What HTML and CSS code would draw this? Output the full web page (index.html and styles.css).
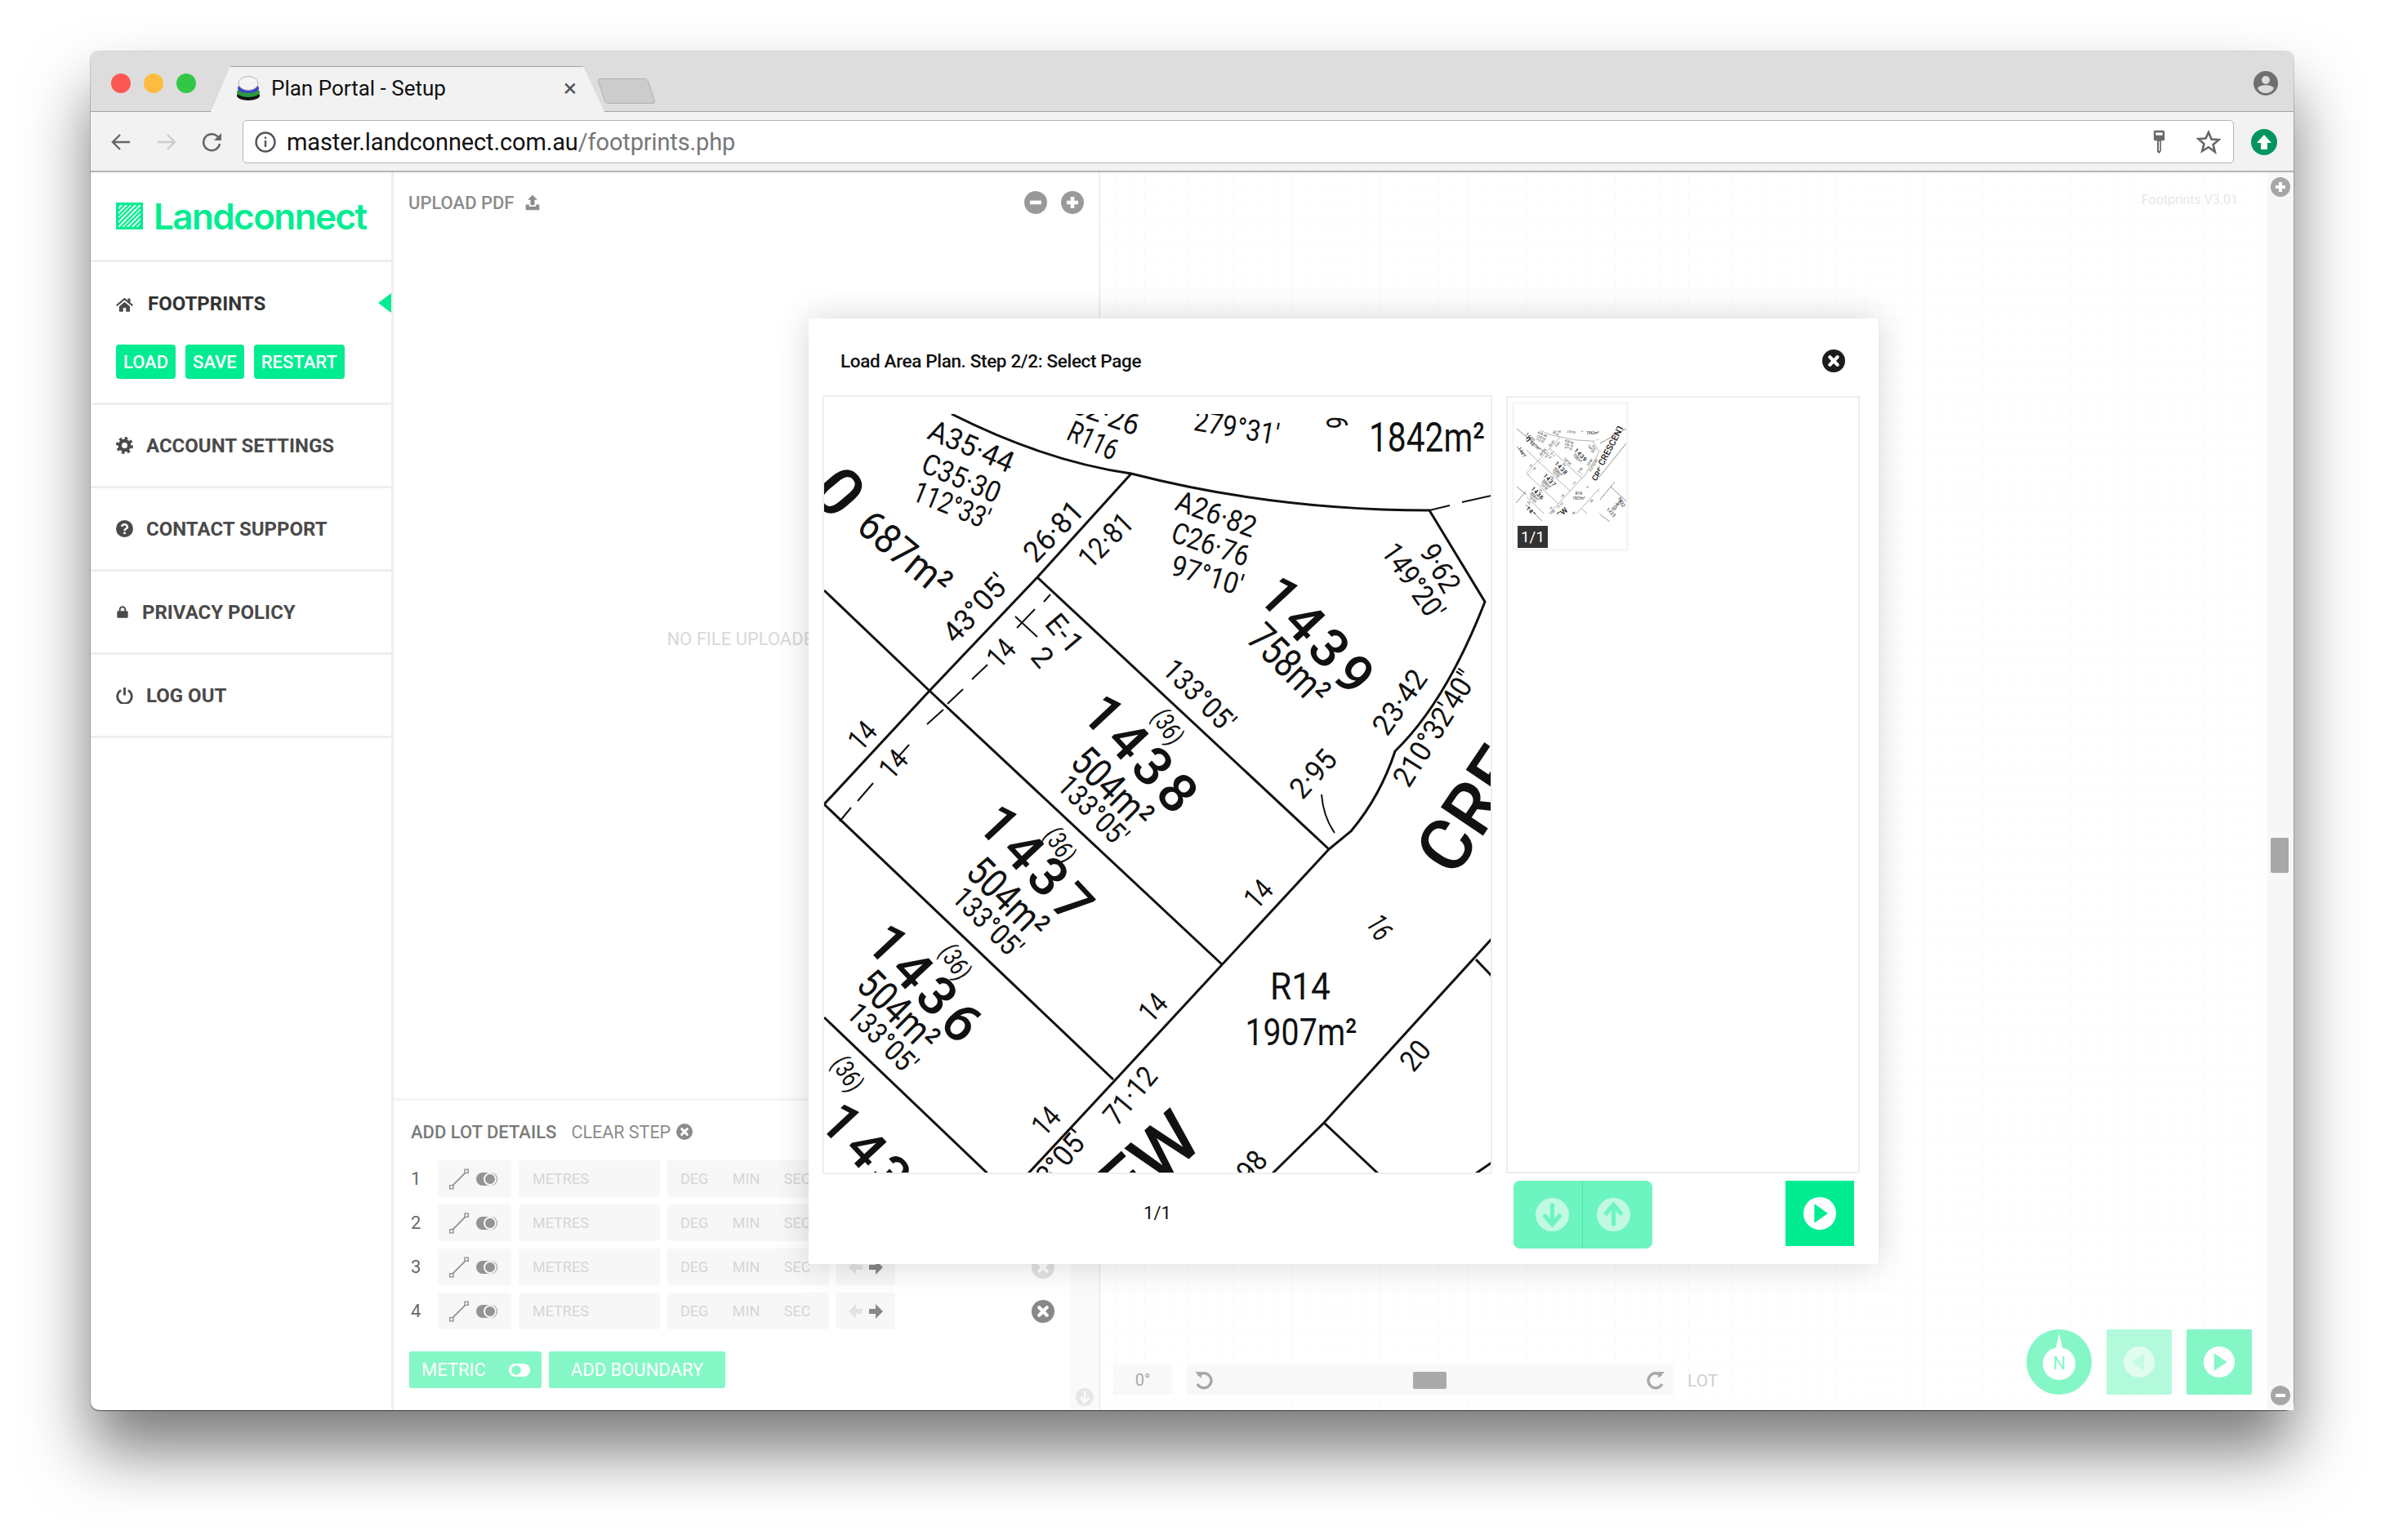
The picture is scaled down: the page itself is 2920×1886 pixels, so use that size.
FILE: index.html
```html
<!DOCTYPE html>
<html lang="en">
<head>
    <meta charset="UTF-8">
    <title>Plan Portal - Setup</title>
    <link rel="stylesheet" href="styles.css">
</head>
<body>

<svg class="defs" width="0" height="0">
    <symbol id="i-x" viewBox="0 0 24 24"><circle cx="12" cy="12" r="12" fill="currentColor"/><path d="M8 8l8 8M16 8l-8 8" stroke="#fff" stroke-width="3.6" stroke-linecap="round"/></symbol>
    <symbol id="i-plus" viewBox="0 0 24 24"><circle cx="12" cy="12" r="12" fill="currentColor"/><path d="M12 6v12M6 12h12" stroke="#fff" stroke-width="4"/></symbol>
    <symbol id="i-minus" viewBox="0 0 24 24"><circle cx="12" cy="12" r="12" fill="currentColor"/><path d="M6 12h12" stroke="#fff" stroke-width="4"/></symbol>
    <symbol id="i-home" viewBox="0 0 24 24"><path fill="currentColor" d="M12 3 0 13l1.600 1.900L12 6.300l10.400 8.600L24 13l-4-3.300V4h-3.500v2.800zM4.500 15v7.500h5.500V17h4v5.500h5.500V15L12 8.800z"/></symbol>
    <symbol id="i-gear" viewBox="0 0 24 24"><circle cx="12" cy="12" r="6.500" fill="none" stroke="currentColor" stroke-width="5"/><circle cx="12" cy="12" r="10" fill="none" stroke="currentColor" stroke-width="4" stroke-dasharray="3.900 3.950"/></symbol>
    <symbol id="i-help" viewBox="0 0 24 24"><circle cx="12" cy="12" r="12" fill="currentColor"/><path d="M8.300 9.200a3.800 3.300 0 1 1 5.600 3c-1.300.7-1.900 1.200-1.900 2.600" fill="none" stroke="#fff" stroke-width="2.800"/><rect x="10.500" y="16.500" width="3" height="3" fill="#fff"/></symbol>
    <symbol id="i-lock" viewBox="0 0 24 24"><rect x="2" y="10" width="20" height="13" rx="2" fill="currentColor"/><path d="M7 11V7.500a5 5 0 0 1 10 0V11" fill="none" stroke="currentColor" stroke-width="3"/></symbol>
    <symbol id="i-power" viewBox="0 0 24 24"><path d="M7 5a10 10 0 1 0 10 0M12 1v11" fill="none" stroke="currentColor" stroke-width="3.200"/></symbol>
    <symbol id="i-upload" viewBox="0 0 24 24"><path fill="currentColor" d="M12 1l7 7h-4v8H9V8H5zM2 15h5v3h10v-3h5v8H2z"/></symbol>
    <symbol id="i-down" viewBox="0 0 24 24"><circle cx="12" cy="12" r="12" fill="currentColor"/><path d="M12 4v14M6 12l6 7 6-7" fill="none" stroke="var(--cut, #fff)" stroke-width="3"/></symbol>
    <symbol id="i-up" viewBox="0 0 24 24"><circle cx="12" cy="12" r="12" fill="currentColor"/><path d="M12 20V6M6 12l6-7 6 7" fill="none" stroke="var(--cut, #fff)" stroke-width="3"/></symbol>
    <symbol id="i-next" viewBox="0 0 24 24"><circle cx="12" cy="12" r="12" fill="currentColor"/><path d="M8 5l10 7-10 7z" fill="var(--cut, #fff)"/></symbol>
    <symbol id="i-prev" viewBox="0 0 24 24"><circle cx="12" cy="12" r="12" fill="currentColor"/><path d="M16 5L6 12l10 7z" fill="var(--cut, #fff)"/></symbol>
    <symbol id="i-undo" viewBox="0 0 24 24"><path d="M6 7a9 9 0 1 1-1 10" fill="none" stroke="currentColor" stroke-width="3.400"/><path d="M2 2h8v8z" fill="currentColor"/></symbol>
    <symbol id="i-redo" viewBox="0 0 24 24"><path d="M18 7a9 9 0 1 0 1 10" fill="none" stroke="currentColor" stroke-width="3.400"/><path d="M22 2h-8v8z" fill="currentColor"/></symbol>
    <symbol id="i-line" viewBox="0 0 26 26"><path d="M5 21 21 5" stroke="currentColor" stroke-width="1.400"/><path d="M2.500 20h4v4h-4zM19.500 2h4v4h-4z" fill="#f7f7f7" stroke="currentColor" stroke-width="1.200"/></symbol>
    <symbol id="i-toggle" viewBox="0 0 26 16"><rect width="26" height="16" rx="8" fill="#949494"/><circle cx="17" cy="8" r="7" fill="#949494" stroke="#f7f7f7" stroke-width="2"/></symbol>
    <symbol id="i-swap" viewBox="0 0 48 24"><path d="M12 3 3 12l9 9v-6h8V9h-8z" fill="#e3e3e3"/><path d="M36 3l9 9-9 9v-6h-8V9h8z" fill="#888"/></symbol>
</svg>

<div class="window">
    <div class="tabstrip">
        <div class="lights">
            <span class="light light-red"></span>
            <span class="light light-amber"></span>
            <span class="light light-green"></span>
        </div>
        <div class="tab">
            <svg class="favicon" viewBox="0 0 30 30">
                <ellipse cx="15" cy="24" rx="14" ry="6" fill="#111"/>
                <ellipse cx="15" cy="20" rx="14" ry="6" fill="#2a9a3c"/>
                <ellipse cx="15" cy="15" rx="13" ry="6" fill="#3d45c8"/>
                <ellipse cx="15" cy="9" rx="12" ry="8.500" fill="#f4f4f4" stroke="#b5b5b5"/>
            </svg>
            <span class="tab-title">Plan Portal - Setup</span>
            <span class="tab-close">×</span>
        </div>
        <div class="newtab"></div>
        <svg class="profile" viewBox="0 0 30 30">
            <circle cx="15" cy="15" r="15" fill="#6f6f6f"/>
            <circle cx="15" cy="11" r="5" fill="#dcdcdc"/>
            <path d="M5 21c3-5 17-5 20 0-2 4-6 6-10 6s-8-2-10-6z" fill="#dcdcdc"/>
        </svg>
    </div>

    <div class="toolbar">
        <svg class="nav-ico nav-back" viewBox="0 0 26 26"><path d="M24 13H4M12 4l-9 9 9 9" fill="none" stroke="currentColor" stroke-width="2.400"/></svg>
        <svg class="nav-ico nav-fwd" viewBox="0 0 26 26"><path d="M2 13h20M14 4l9 9-9 9" fill="none" stroke="currentColor" stroke-width="2.400"/></svg>
        <svg class="nav-ico nav-reload" viewBox="0 0 26 26"><path d="M20 7a10 10 0 1 0 2 8" fill="none" stroke="currentColor" stroke-width="2.600"/><path d="M24 2v9h-9z" fill="currentColor"/></svg>
        <div class="omnibox">
            <svg class="info" viewBox="0 0 26 26"><circle cx="13" cy="13" r="11.500" fill="none" stroke="currentColor" stroke-width="2.400"/><path d="M13 11v8M13 6.500v2.500" stroke="currentColor" stroke-width="2.400"/></svg>
            <span class="url">master.landconnect.com.au<span class="url-path">/footprints.php</span></span>
            <svg class="key" viewBox="0 0 18 34"><path fill="#6a6a6a" d="M1 2a2 2 0 0 1 2-2h12a2 2 0 0 1 2 2v11a2 2 0 0 1-2 2h-3v15l-3 4-3-3V15H3a2 2 0 0 1-2-2z"/><rect x="4" y="3" width="10" height="4" fill="#fff"/><rect x="8.500" y="16" width="1.500" height="14" fill="#fff"/></svg>
            <svg class="star" viewBox="0 0 30 30"><path d="M15 3l3.500 8.500 9 .7-6.900 5.900 2.200 8.900L15 21.200l-7.800 4.800 2.200-8.900-6.900-5.900 9-.7z" fill="none" stroke="#666" stroke-width="2.600"/></svg>
        </div>
        <svg class="update" viewBox="0 0 32 32"><circle cx="16" cy="16" r="16" fill="#00955f"/><path d="M16 7l9 10h-5v8h-8v-8H7z" fill="#fff"/></svg>
    </div>

    <div class="app">
        <aside class="sidebar">
            <div class="brand">
                <span class="brand-mark"></span>
                <span class="brand-name">Landconnect</span>
            </div>
            <div class="nav-item nav-current">
                <div class="nav-line">
                    <svg class="nav-glyph"><use href="#i-home"/></svg>
                    <span class="nav-text nav-text-strong">FOOTPRINTS</span>
                </div>
                <div class="nav-actions">
                    <button class="btn-small">LOAD</button>
                    <button class="btn-small">SAVE</button>
                    <button class="btn-small">RESTART</button>
                </div>
            </div>
            <div class="nav-item">
                <div class="nav-line">
                    <svg class="nav-glyph"><use href="#i-gear"/></svg>
                    <span class="nav-text">ACCOUNT SETTINGS</span>
                </div>
            </div>
            <div class="nav-item">
                <div class="nav-line">
                    <svg class="nav-glyph"><use href="#i-help"/></svg>
                    <span class="nav-text">CONTACT SUPPORT</span>
                </div>
            </div>
            <div class="nav-item">
                <div class="nav-line">
                    <svg class="nav-glyph nav-glyph-lock"><use href="#i-lock"/></svg>
                    <span class="nav-text">PRIVACY POLICY</span>
                </div>
            </div>
            <div class="nav-item">
                <div class="nav-line">
                    <svg class="nav-glyph"><use href="#i-power"/></svg>
                    <span class="nav-text">LOG OUT</span>
                </div>
            </div>
        </aside>

        <section class="pdf-panel">
            <div class="pdf-head">
                <span class="pdf-title">UPLOAD PDF</span>
                <svg class="pdf-upload"><use href="#i-upload"/></svg>
                <svg class="zoom-btn zoom-first"><use href="#i-minus"/></svg>
                <svg class="zoom-btn"><use href="#i-plus"/></svg>
            </div>
            <div class="pdf-empty">NO FILE UPLOADED</div>
            <div class="lot">
                <div class="lot-main">
                    <div class="lot-head">
                        <span class="lot-title">ADD LOT DETAILS</span>
                        <span class="lot-clear">CLEAR STEP</span>
                        <svg class="lot-clear-ico"><use href="#i-x"/></svg>
                    </div>
                    <div class="lot-row">
                        <span class="lot-num">1</span>
                        <div class="cell cell-type"><svg class="ico-line"><use href="#i-line"/></svg><svg class="ico-toggle"><use href="#i-toggle"/></svg></div>
                        <div class="cell cell-metres">METRES</div>
                        <div class="cell cell-angle"><span>DEG</span><span>MIN</span><span>SEC</span></div>
                        <div class="cell cell-swap"><svg class="ico-swap"><use href="#i-swap"/></svg></div>
                    </div>
                    <div class="lot-row">
                        <span class="lot-num">2</span>
                        <div class="cell cell-type"><svg class="ico-line"><use href="#i-line"/></svg><svg class="ico-toggle"><use href="#i-toggle"/></svg></div>
                        <div class="cell cell-metres">METRES</div>
                        <div class="cell cell-angle"><span>DEG</span><span>MIN</span><span>SEC</span></div>
                        <div class="cell cell-swap"><svg class="ico-swap"><use href="#i-swap"/></svg></div>
                    </div>
                    <div class="lot-row">
                        <span class="lot-num">3</span>
                        <div class="cell cell-type"><svg class="ico-line"><use href="#i-line"/></svg><svg class="ico-toggle"><use href="#i-toggle"/></svg></div>
                        <div class="cell cell-metres">METRES</div>
                        <div class="cell cell-angle"><span>DEG</span><span>MIN</span><span>SEC</span></div>
                        <div class="cell cell-swap"><svg class="ico-swap"><use href="#i-swap"/></svg></div>
                        <svg class="lot-del lot-del-off"><use href="#i-x"/></svg>
                    </div>
                    <div class="lot-row">
                        <span class="lot-num">4</span>
                        <div class="cell cell-type"><svg class="ico-line"><use href="#i-line"/></svg><svg class="ico-toggle"><use href="#i-toggle"/></svg></div>
                        <div class="cell cell-metres">METRES</div>
                        <div class="cell cell-angle"><span>DEG</span><span>MIN</span><span>SEC</span></div>
                        <div class="cell cell-swap"><svg class="ico-swap"><use href="#i-swap"/></svg></div>
                        <svg class="lot-del"><use href="#i-x"/></svg>
                    </div>
                    <div class="lot-actions">
                        <button class="btn-soft btn-metric">METRIC
                            <svg class="ico-metric" viewBox="0 0 26 16"><rect width="26" height="16" rx="8" fill="#fff"/><circle cx="9" cy="8" r="6.500" fill="#85f7c7" stroke="#fff" stroke-width="1.500"/></svg>
                        </button>
                        <button class="btn-soft btn-boundary">ADD BOUNDARY</button>
                    </div>
                </div>
                <div class="lot-strip"><svg class="lot-strip-ico"><use href="#i-down"/></svg></div>
            </div>
        </section>

        <section class="stage">
            <div class="stage-main">
                <div class="version">Footprints V3.01</div>
                <div class="controls">
                    <div class="angle-box">0°</div>
                    <div class="rotate">
                        <svg class="rotate-ico"><use href="#i-undo"/></svg>
                        <span class="rotate-thumb"></span>
                        <svg class="rotate-ico"><use href="#i-redo"/></svg>
                    </div>
                    <span class="lot-label">LOT</span>
                    <svg class="compass" viewBox="0 0 80 80">
                        <circle cx="40" cy="40" r="40" fill="#85f7c7"/>
                        <path d="M40 5l5 22H35z" fill="#fff"/>
                        <circle cx="40" cy="42" r="20" fill="#fff"/>
                        <text class="compass-n" x="40" y="49">N</text>
                    </svg>
                    <button class="square square-off"><svg class="square-ico"><use href="#i-prev"/></svg></button>
                    <button class="square"><svg class="square-ico"><use href="#i-next"/></svg></button>
                </div>
            </div>
            <div class="stage-strip">
                <svg class="strip-ico"><use href="#i-plus"/></svg>
                <span class="strip-thumb"></span>
                <svg class="strip-ico"><use href="#i-minus"/></svg>
            </div>
        </section>

        <div class="modal">
            <div class="modal-head">
                <span class="modal-title">Load Area Plan. Step 2/2: Select Page</span>
                <svg class="modal-close"><use href="#i-x"/></svg>
            </div>
            <div class="modal-body">
                <div class="page-view">
                    <svg class="plan" viewBox="1008 485 818 952" width="818" height="952">
                        <defs>
                            <clipPath id="plan-clip"><rect x="1008" y="507" width="818" height="930"/></clipPath>
                        </defs>
                        <g id="plan" clip-path="url(#plan-clip)">
                            <path class="pl" d="M1165 507Q1280 565 1385 580Q1560 625 1750 625L1818 737Q1770 860 1708 920Q1690 975 1654 1018L1627 1040L1366 1322L1259 1437"/>
                            <path class="pl" d="M1385 580L1270 707L1138 846L1009 985L1363 1322"/>
                            <path class="pl" d="M1009 723L1138 846L1496 1181"/>
                            <path class="pl" d="M1270 707L1627 1040"/>
                            <path class="pl" d="M1009 1246L1209 1437"/>
                            <path class="pl" d="M1826 1150L1621 1375L1558 1437"/>
                            <path class="pl" d="M1621 1375L1687 1437"/>
                            <path class="pl" d="M1807 1175L1826 1195"/>
                            <path class="pl" d="M1826 1424L1807 1437"/>
                            <path class="pl-thin" d="M1618 973Q1620 1000 1634 1020"/>
                            <path class="pl-thin" d="M1267 746L1245 769M1243 755L1270 780"/>
                            <path class="pl-thin" d="M1750 625L1775 619M1790 615L1826 607"/>
                            <path class="pl-thin" d="M1286 728L1278 737M1209 814L1190 832M1179 844L1160 862M1155 869L1135 887M1113 912L1097 930M1069 959L1050 981M1042 989L1028 1006"/>

                            <text class="t t-l" transform="translate(1747 536)" textLength="142" lengthAdjust="spacingAndGlyphs">1842m²</text>
                            <text class="t t-m" transform="translate(1189 547) rotate(23)" textLength="110" lengthAdjust="spacingAndGlyphs">A35·44</text>
                            <text class="t t-m" transform="translate(1177 586) rotate(23)" textLength="101" lengthAdjust="spacingAndGlyphs">C35·30</text>
                            <text class="t t-m" transform="translate(1165 619) rotate(22)" textLength="98" lengthAdjust="spacingAndGlyphs">112°33'</text>
                            <text class="t t-m" transform="translate(1354 508) rotate(20)" textLength="85" lengthAdjust="spacingAndGlyphs">52·26</text>
                            <text class="t t-m" transform="translate(1338 540) rotate(25)" textLength="64" lengthAdjust="spacingAndGlyphs">R116</text>
                            <text class="t t-m" transform="translate(1514 524) rotate(10)" textLength="105" lengthAdjust="spacingAndGlyphs">279°31'</text>
                            <text class="t t-m" transform="translate(1636 510) rotate(90)" textLength="30" lengthAdjust="spacingAndGlyphs">16</text>
                            <text class="t t-h" transform="translate(1026 603) rotate(50)">0</text>
                            <text class="t t-l" transform="translate(1108 678) rotate(40)" textLength="132" lengthAdjust="spacingAndGlyphs">687m²</text>
                            <text class="t t-m" transform="translate(1290 651) rotate(-46)" textLength="88" lengthAdjust="spacingAndGlyphs">26·81</text>
                            <text class="t t-m" transform="translate(1354 662) rotate(-45)" textLength="78" lengthAdjust="spacingAndGlyphs">12·81</text>
                            <text class="t t-m" transform="translate(1195 745) rotate(-47)" textLength="100" lengthAdjust="spacingAndGlyphs">43°05'</text>
                            <text class="t t-m" transform="translate(1489 630) rotate(20)" textLength="102" lengthAdjust="spacingAndGlyphs">A26·82</text>
                            <text class="t t-m" transform="translate(1482 667) rotate(19)" textLength="98" lengthAdjust="spacingAndGlyphs">C26·76</text>
                            <text class="t t-m" transform="translate(1478 705) rotate(17)" textLength="90" lengthAdjust="spacingAndGlyphs">97°10'</text>
                            <text class="t t-b" transform="translate(1612 778) rotate(47)" textLength="170">1439</text>
                            <text class="t t-l" transform="translate(1578 814) rotate(45)" textLength="118" lengthAdjust="spacingAndGlyphs">758m²</text>
                            <text class="t t-m" transform="translate(1763 696) rotate(60)" textLength="62" lengthAdjust="spacingAndGlyphs">9·62</text>
                            <text class="t t-m" transform="translate(1730 712) rotate(55)" textLength="105" lengthAdjust="spacingAndGlyphs">149°20'</text>
                            <text class="t t-m" transform="translate(1714 860) rotate(-55)" textLength="88" lengthAdjust="spacingAndGlyphs">23·42</text>
                            <text class="t t-m" transform="translate(1757 892) rotate(-58)" textLength="160" lengthAdjust="spacingAndGlyphs">210°32'40"</text>
                            <text class="t t-m" transform="translate(1226 800) rotate(-47)" textLength="32" lengthAdjust="spacingAndGlyphs">14</text>
                            <text class="t t-m" transform="translate(1303 776) rotate(50)" textLength="50" lengthAdjust="spacingAndGlyphs">E-1</text>
                            <text class="t t-m" transform="translate(1276 805) rotate(50)">2</text>
                            <text class="t t-m" transform="translate(1468 852) rotate(45)" textLength="108" lengthAdjust="spacingAndGlyphs">133°05'</text>
                            <text class="t t-m" transform="translate(1056 901) rotate(-48)" textLength="32" lengthAdjust="spacingAndGlyphs">14</text>
                            <text class="t t-m" transform="translate(1094 936) rotate(-48)" textLength="32" lengthAdjust="spacingAndGlyphs">14</text>

                            <text class="t t-b" transform="translate(1396 923) rotate(47)" textLength="170">1438</text>
                            <text class="t t-s" transform="translate(1430 890) rotate(58)" textLength="44" lengthAdjust="spacingAndGlyphs">(36)</text>
                            <text class="t t-l" transform="translate(1362 965) rotate(45)" textLength="118" lengthAdjust="spacingAndGlyphs">504m²</text>
                            <text class="t t-m" transform="translate(1338 993) rotate(45)" textLength="105" lengthAdjust="spacingAndGlyphs">133°05'</text>
                            <text class="t t-m" transform="translate(1608 948) rotate(-48)" textLength="66" lengthAdjust="spacingAndGlyphs">2·95</text>

                            <text class="t t-b" transform="translate(1268 1058) rotate(47)" textLength="170">1437</text>
                            <text class="t t-s" transform="translate(1298 1035) rotate(58)" textLength="44" lengthAdjust="spacingAndGlyphs">(36)</text>
                            <text class="t t-l" transform="translate(1234 1100) rotate(45)" textLength="118" lengthAdjust="spacingAndGlyphs">504m²</text>
                            <text class="t t-m" transform="translate(1209 1130) rotate(45)" textLength="105" lengthAdjust="spacingAndGlyphs">133°05'</text>
                            <text class="t t-m" transform="translate(1541 1095) rotate(-47)" textLength="32" lengthAdjust="spacingAndGlyphs">14</text>

                            <text class="t t-b" transform="translate(1132 1204) rotate(47)" textLength="170">1436</text>
                            <text class="t t-s" transform="translate(1170 1178) rotate(58)" textLength="44" lengthAdjust="spacingAndGlyphs">(36)</text>
                            <text class="t t-l" transform="translate(1100 1238) rotate(45)" textLength="118" lengthAdjust="spacingAndGlyphs">504m²</text>
                            <text class="t t-m" transform="translate(1080 1272) rotate(45)" textLength="105" lengthAdjust="spacingAndGlyphs">133°05'</text>
                            <text class="t t-s" transform="translate(1038 1315) rotate(58)" textLength="44" lengthAdjust="spacingAndGlyphs">(36)</text>
                            <text class="t t-b" transform="translate(1075 1423) rotate(47)" textLength="170">1435</text>

                            <text class="t t-m" transform="translate(1412 1234) rotate(-47)" textLength="32" lengthAdjust="spacingAndGlyphs">14</text>
                            <text class="t t-m" transform="translate(1281 1373) rotate(-47)" textLength="32" lengthAdjust="spacingAndGlyphs">14</text>
                            <text class="t t-m" transform="translate(1384 1342) rotate(-50)" textLength="80" lengthAdjust="spacingAndGlyphs">71·12</text>
                            <text class="t t-m" transform="translate(1300 1418) rotate(-50)" textLength="76" lengthAdjust="spacingAndGlyphs">3°05'</text>
                            <text class="t t-r" transform="translate(1592 1207)" textLength="74" lengthAdjust="spacingAndGlyphs">R14</text>
                            <text class="t t-r" transform="translate(1593 1263)" textLength="137" lengthAdjust="spacingAndGlyphs">1907m²</text>
                            <text class="t t-m" transform="translate(1689 1136) rotate(60)" textLength="28" lengthAdjust="spacingAndGlyphs">16</text>
                            <text class="t t-m" transform="translate(1733 1293) rotate(-50)" textLength="36" lengthAdjust="spacingAndGlyphs">20</text>
                            <text class="t t-m" transform="translate(1533 1428) rotate(-50)" textLength="36" lengthAdjust="spacingAndGlyphs">98</text>
                            <text class="t t-x" transform="translate(1407 1422) rotate(-42)" textLength="130" lengthAdjust="spacingAndGlyphs">EW</text>
                            <text class="t t-x" transform="translate(1815 970) rotate(-56)" textLength="215" lengthAdjust="spacingAndGlyphs">CRES</text>
                        </g>
                    </svg>
                </div>
                <div class="page-list">
                    <div class="page-thumb">
                        <svg class="thumb-img" viewBox="1852 520 137 117" width="137" height="117">
                            <g transform="translate(1755.700 469.400) scale(.11)"><use href="#plan"/></g>
                            <path class="th" d="M1855 523l40 34M1855 545l12 12M1855 594l12 10M1957 541l32-18M1957 581l32-40M1957 610l18-22M1970 594l19 18M1957 628l12 9M1866 600l-12 14M1866 616l20 20"/>
                            <text class="th-text" transform="translate(1865 530) rotate(45)">1440</text>
                            <text class="th-text" transform="translate(1856 547) rotate(60)">1441</text>
                            <text class="th-text th-bold" transform="translate(1961 569) rotate(-62)">CRESCENT</text>
                            <text class="th-text" transform="translate(1978 608) rotate(60)">1432</text>
                            <text class="th-text" transform="translate(1964 622) rotate(45)">1433</text>
                            <text class="th-text" transform="translate(1974 624) rotate(-50)">504m²</text>
                        </svg>
                        <span class="thumb-tag">1/1</span>
                    </div>
                </div>
            </div>
            <div class="modal-foot">
                <div class="page-count">1/1</div>
                <div class="pager">
                    <button class="pager-btn pager-down"><svg class="pager-ico"><use href="#i-down"/></svg></button>
                    <button class="pager-btn pager-up"><svg class="pager-ico"><use href="#i-up"/></svg></button>
                </div>
                <button class="go"><svg class="go-ico"><use href="#i-next"/></svg></button>
            </div>
        </div>
    </div>
</div>

</body>
</html>
```
FILE: styles.css
```css
:root {
    --green: #00ec91;
    --green-soft: #85f7c7;
    --green-pale: #b3fadc;
    --line: #eeeeee;
    --cell: #f7f7f7;
    --ink: #4a4a4a;
}

*, *::before, *::after {
    box-sizing: border-box;
    margin: 0;
    padding: 0;
}

body {
    width: 2920px;
    height: 1886px;
    padding: 63px 0 0 111px;
    background: #fff;
    font-family: Roboto, "Liberation Sans", sans-serif;
    overflow: hidden;
}

button {
    border: 0;
    font-family: inherit;
    cursor: pointer;
}

.defs {
    position: absolute;
}

.window {
    width: 2697px;
    height: 1664px;
    display: flex;
    flex-direction: column;
    background: #fff;
    border-radius: 10px;
    box-shadow: 0 50px 80px rgba(0, 0, 0, 0.52), 0 0 0 1px rgba(0, 0, 0, 0.12), 0 1px 1px rgba(0, 0, 0, 0.5);
    overflow: visible;
}

/* browser chrome */
.tabstrip {
    height: 74px;
    display: flex;
    align-items: flex-end;
    background: #dddddd;
    border-bottom: 1px solid #a3a3a3;
    border-radius: 10px 10px 0 0;
    padding-right: 19px;
    position: relative;
}

.lights {
    display: flex;
    gap: 16px;
    align-self: flex-start;
    padding: 27px 0 0 25px;
    width: 147px;
}

.light {
    width: 24px;
    height: 24px;
    border-radius: 50%;
}

.light-red { background: #fc5753; }
.light-amber { background: #fdbc40; }
.light-green { background: #33c748; }

.tab {
    width: 482px;
    height: 56px;
    margin-bottom: -1px;
    display: flex;
    align-items: center;
    padding: 0 34px 2px 31px;
    background: #f2f2f2;
    clip-path: polygon(0 100%, 24px 0, 456px 0, 100% 100%);
    position: relative;
}

.tab::before {
    content: '';
    position: absolute;
    left: 24px;
    right: 26px;
    top: 0;
    height: 1px;
    background: #a3a3a3;
}

.favicon {
    width: 30px;
    height: 30px;
    flex: none;
}

.tab-title {
    margin-left: 13px;
    font-size: 26px;
    color: #111;
    flex: 1;
}

.tab-close {
    font-size: 30px;
    color: #555;
    line-height: 1;
}

.newtab {
    width: 62px;
    height: 31px;
    margin: 0 0 9px -4px;
    background: #cccccc;
    border: 1px solid #b0b0b0;
    border-radius: 4px;
    transform: skewX(18deg);
}

.profile {
    width: 30px;
    height: 30px;
    margin-left: auto;
    align-self: flex-start;
    margin-top: 24px;
}

.toolbar {
    height: 74px;
    display: flex;
    align-items: center;
    background: #f2f2f2;
    border-bottom: 2px solid #b4b4b4;
    padding: 1px 20px 0 24px;
}

.nav-ico {
    width: 26px;
    height: 26px;
    margin-right: 30px;
    flex: none;
}

.nav-back { color: #666; }
.nav-fwd { color: #ccc; }
.nav-reload { color: #666; margin-right: 24px; }

.omnibox {
    width: 2438px;
    height: 53px;
    display: flex;
    align-items: center;
    background: #fff;
    border: 1px solid #b4b4b4;
    border-radius: 5px;
    padding: 0 15px 0 14px;
}

.info {
    width: 26px;
    height: 26px;
    color: #555;
    flex: none;
}

.url {
    margin-left: 13px;
    font-size: 29px;
    color: #111;
    letter-spacing: -0.13px;
}

.url-path { color: #777; }

.key {
    width: 15px;
    height: 30px;
    margin-left: auto;
}

.star {
    width: 30px;
    height: 30px;
    margin-left: 38px;
}

.update {
    width: 32px;
    height: 32px;
    margin-left: 21px;
}

/* app layout */
.app {
    flex: 1;
    display: flex;
    position: relative;
    min-height: 0;
}

.sidebar {
    width: 371px;
    flex: none;
    border-right: 3px solid var(--line);
}

.brand {
    height: 110px;
    display: flex;
    align-items: center;
    gap: 13px;
    padding: 0 0 0 31px;
    border-bottom: 3px solid var(--line);
}

.brand-mark {
    width: 33px;
    height: 33px;
    border: 3px solid var(--green);
    background: repeating-linear-gradient(135deg, var(--green) 0 2px, #d4fcec 2px 4px);
}

.brand-name {
    font-family: Inter, Roboto, sans-serif;
    font-size: 44px;
    font-weight: 600;
    color: var(--green);
    letter-spacing: -1.600px;
    line-height: 1;
}

.nav-item {
    height: 102px;
    padding: 0 0 0 31px;
    border-bottom: 3px solid var(--line);
    display: flex;
    flex-direction: column;
    justify-content: center;
}

.nav-current {
    height: 175px;
    justify-content: flex-start;
    padding-top: 37px;
    position: relative;
}

.nav-current::after {
    content: '';
    position: absolute;
    right: 0;
    top: 38px;
    border-style: solid;
    border-width: 12px 16px 12px 0;
    border-color: transparent var(--green) transparent transparent;
}

.nav-line {
    display: flex;
    align-items: center;
    gap: 16px;
}

.nav-glyph {
    width: 21px;
    height: 21px;
    color: var(--ink);
    flex: none;
}

.nav-glyph-lock {
    width: 16px;
}

.nav-text {
    font-size: 24px;
    font-weight: 700;
    color: var(--ink);
    line-height: 28px;
}

.nav-text-strong {
    color: #333;
    margin-left: 2px;
}

.nav-actions {
    display: flex;
    gap: 12px;
    margin-top: 36px;
}

.btn-small {
    height: 42px;
    padding: 0 9px;
    background: var(--green);
    border-radius: 4px;
    color: #fff;
    font-size: 22px;
    font-weight: 500;
}

/* pdf panel */
.pdf-panel {
    width: 865px;
    flex: none;
    display: flex;
    flex-direction: column;
    border-right: 2px solid #f0f0f0;
}

.pdf-head {
    height: 72px;
    display: flex;
    align-items: center;
    padding: 2px 18px 0 18px;
}

.pdf-title {
    font-size: 22px;
    font-weight: 500;
    color: #8c8c8c;
}

.pdf-upload {
    width: 20px;
    height: 20px;
    margin-left: 12px;
    color: #8c8c8c;
}

.zoom-btn {
    width: 28px;
    height: 28px;
    margin-left: 17px;
    color: #999;
}

.zoom-first {
    margin-left: auto;
}

.pdf-empty {
    flex: 1;
    display: flex;
    align-items: center;
    justify-content: center;
    padding-bottom: 64px;
    font-size: 22px;
    color: #d8d8d8;
}

.lot {
    height: 382px;
    display: flex;
    border-top: 3px solid #f5f5f5;
}

.lot-main {
    flex: 1;
    padding: 22px 20px 0 21px;
}

.lot-strip {
    width: 34px;
    background: #fafafa;
    display: flex;
    flex-direction: column;
    justify-content: flex-end;
    align-items: center;
    padding-bottom: 5px;
}

.lot-strip-ico {
    width: 22px;
    height: 22px;
    color: #e6e6e6;
    --cut: #fafafa;
}

.lot-head {
    display: flex;
    align-items: center;
    height: 32px;
    margin-bottom: 19px;
}

.lot-title {
    font-size: 22px;
    font-weight: 500;
    color: #7a7a7a;
}

.lot-clear {
    margin-left: 18px;
    font-size: 21.500px;
    color: #8c8c8c;
}

.lot-clear-ico {
    width: 20px;
    height: 20px;
    margin-left: 7px;
    color: #8c8c8c;
}

.lot-row {
    display: flex;
    align-items: center;
    height: 45px;
    margin-bottom: 9px;
    gap: 9px;
}

.lot-num {
    width: 24px;
    font-size: 22px;
    color: #6a6a6a;
}

.cell {
    height: 45px;
    display: flex;
    align-items: center;
    background: var(--cell);
    border-radius: 4px;
    font-size: 18px;
    color: #d6d6d6;
}

.cell-type {
    width: 90px;
    padding-left: 12px;
    gap: 7px;
    color: #8a8a8a;
}

.ico-line {
    width: 28px;
    height: 28px;
}

.ico-toggle {
    width: 26px;
    height: 16px;
}

.cell-metres {
    width: 173px;
    padding-left: 17px;
}

.cell-angle {
    width: 198px;
    padding-left: 16px;
    gap: 29.500px;
}

.cell-swap {
    width: 72px;
    justify-content: center;
}

.ico-swap {
    width: 48px;
    height: 24px;
}

.lot-del {
    width: 28px;
    height: 28px;
    margin-left: auto;
    color: #888;
}

.lot-del-off {
    color: #e2e2e2;
}

.lot-actions {
    display: flex;
    gap: 9px;
    margin: 27px 0 0 -2px;
}

.btn-soft {
    height: 45px;
    background: var(--green-soft);
    border-radius: 3px;
    color: #fff;
    font-size: 22px;
}

.btn-metric {
    width: 162px;
    display: flex;
    align-items: center;
    justify-content: space-between;
    padding: 0 14px 0 15px;
}

.ico-metric {
    width: 26px;
    height: 16px;
}

.btn-boundary {
    width: 216px;
}

/* right stage */
.stage {
    flex: 1;
    display: flex;
    min-width: 0;
    background-color: #fff;
    background-image:
        linear-gradient(#fbfbfb 1px, transparent 1px),
        linear-gradient(90deg, #fbfbfb 1px, transparent 1px);
    background-size: 18px 18px;
}

.stage-main {
    flex: 1;
    display: flex;
    flex-direction: column;
    justify-content: space-between;
    padding: 20px 19px 19px 16px;
}

.version {
    align-self: flex-end;
    margin-right: 17px;
    font-size: 16px;
    color: #e8e8e8;
    line-height: 28px;
}

.controls {
    display: flex;
    align-items: flex-end;
}

.angle-box {
    width: 72px;
    height: 36px;
    display: flex;
    align-items: center;
    justify-content: center;
    background: #f8f8f8;
    font-size: 20px;
    color: #aaa;
}

.rotate {
    width: 595px;
    height: 36px;
    margin-left: 18px;
    display: flex;
    align-items: center;
    justify-content: space-between;
    padding: 0 8px;
    background: #f8f8f8;
}

.rotate-ico {
    width: 24px;
    height: 24px;
    color: #a8a8a8;
}

.rotate-thumb {
    width: 41px;
    height: 21px;
    background: #aaa;
    border-radius: 2px;
}

.lot-label {
    height: 36px;
    line-height: 38px;
    margin-left: 18px;
    font-size: 21px;
    color: #cfcfcf;
}

.compass {
    width: 80px;
    height: 80px;
    margin-left: auto;
}

.compass-n {
    font-size: 22px;
    text-anchor: middle;
    fill: #85f7c7;
}

.square {
    width: 80px;
    height: 80px;
    margin-left: 18px;
    display: flex;
    align-items: center;
    justify-content: center;
    background: var(--green-soft);
    border-radius: 2px;
    --cut: #85f7c7;
}

.square-off {
    background: var(--green-pale);
    --cut: #c7fbe5;
}

.square-ico {
    width: 38px;
    height: 38px;
    color: #fff;
}

.square-off .square-ico {
    color: #e1fdf1;
}

.stage-strip {
    width: 32px;
    flex: none;
    display: flex;
    flex-direction: column;
    justify-content: space-between;
    align-items: center;
    padding: 6px 0;
    background: #f7f7f7;
    border-radius: 0 0 10px 0;
    position: relative;
}

.strip-ico {
    width: 24px;
    height: 24px;
    color: #a6a6a6;
}

/* scrollbar handle sits over the strip */
.strip-thumb {
    position: absolute;
    left: 4px;
    top: 815px;
    width: 22px;
    height: 43px;
    background: #a8a8a8;
    border-radius: 2px;
}

/* modal */
.modal {
    position: absolute;
    left: 879px;
    top: 179px;
    width: 1310px;
    height: 1158px;
    display: flex;
    flex-direction: column;
    background: #fff;
    box-shadow: 0 0 40px rgba(0, 0, 0, 0.16);
}

.modal-head {
    height: 95px;
    display: flex;
    align-items: center;
    justify-content: space-between;
    padding: 8px 41px 0 39px;
}

.modal-title {
    font-size: 22.500px;
    font-weight: 500;
    color: #111;
    letter-spacing: -0.35px;
}

.modal-close {
    width: 28px;
    height: 28px;
    color: #1c1c1c;
}

.modal-body {
    display: flex;
    gap: 18px;
    padding-left: 18px;
}

.page-view {
    width: 818px;
    height: 952px;
    outline: 2px solid #eeeeee;
    outline-offset: -1px;
    overflow: hidden;
}

.plan {
    display: block;
}

.pl {
    fill: none;
    stroke: #111;
    stroke-width: 3;
}

.pl-thin {
    fill: none;
    stroke: #111;
    stroke-width: 2;
}

.t {
    font-family: Roboto, sans-serif;
    text-anchor: middle;
    dominant-baseline: central;
    fill: #111;
}

.t-s { font-size: 32px; }
.t-m { font-size: 36px; }
.t-l { font-size: 50px; }
.t-r { font-size: 47px; }
.t-b { font-size: 66px; font-weight: 500; }
.t-h { font-size: 84px; font-weight: 500; }
.t-x { font-size: 88px; font-weight: 500; }

.page-list {
    width: 433px;
    height: 952px;
    padding: 5px;
    border: 2px solid #eeeeee;
}

.page-thumb {
    width: 143px;
    height: 183px;
    padding: 27px 0 0 0;
    border: 3px solid #f6f6f6;
    position: relative;
}

.thumb-img {
    display: block;
}

.th {
    fill: none;
    stroke: #222;
    stroke-width: 0.5;
}

.th-text {
    font-family: Roboto, sans-serif;
    font-size: 6px;
    fill: #222;
}

.th-bold {
    font-size: 11px;
    font-weight: 500;
}

.thumb-tag {
    position: absolute;
    left: 4px;
    top: 149px;
    width: 37px;
    height: 27px;
    display: flex;
    align-items: center;
    justify-content: center;
    background: #333;
    color: #fff;
    font-size: 19px;
}

.modal-foot {
    flex: 1;
    display: flex;
    align-items: flex-start;
    padding: 9px 30px 0 18px;
}

.page-count {
    width: 818px;
    height: 78px;
    display: flex;
    align-items: center;
    justify-content: center;
    font-size: 22px;
    color: #111;
}

.pager {
    margin-left: 27px;
    display: flex;
    height: 83px;
    border-radius: 8px;
    overflow: hidden;
}

.pager-btn {
    width: 85px;
    display: flex;
    align-items: center;
    justify-content: center;
    background: #6cf5c0;
    --cut: #6cf5c0;
}

.pager-down {
    padding-left: 10px;
    border-right: 1px solid #50e5ab;
}

.pager-up {
    padding-right: 10px;
}

.pager-ico {
    width: 41px;
    height: 41px;
    color: #c1f9e4;
}

.go {
    width: 84px;
    height: 80px;
    margin-left: auto;
    display: flex;
    align-items: center;
    justify-content: center;
    background: var(--green);
    --cut: #00ec91;
}

.go-ico {
    width: 40px;
    height: 40px;
    color: #fff;
}
```
